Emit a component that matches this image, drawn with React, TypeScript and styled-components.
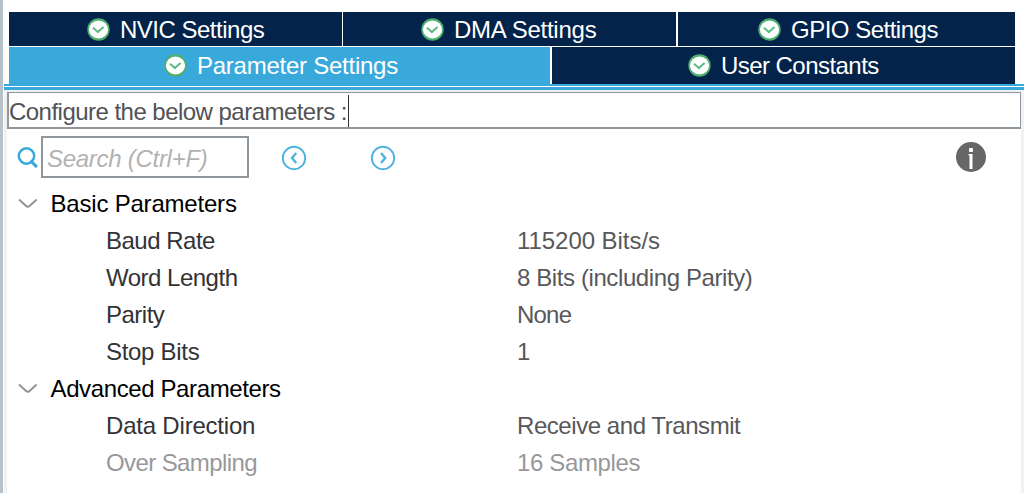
import React from "react";
import styled, { createGlobalStyle } from "styled-components";

const GlobalStyle = createGlobalStyle`
  * { box-sizing: border-box; }
  body {
    margin: 0;
    background: #fff;
    font-family: "Liberation Sans", Arial, sans-serif;
    font-size: 24px;
    overflow: hidden;
  }
`;

const Window = styled.div`
  display: flex;
  flex-direction: column;
  width: 1024px;
  height: 493px;
  padding-top: 12px;
  border-left: 3px solid #b7c1c9;
`;

const TabRow = styled.div<{ $height: number }>`
  display: flex;
  height: ${(p) => p.$height}px;
  margin: 0 9px 1px 6px;
`;

const Tab = styled.div<{ $width: number; $pad: number; $active?: boolean; $gap?: number; $lower?: boolean }>`
  display: flex;
  align-items: center;
  gap: 10px;
  flex: none;
  width: ${(p) => p.$width}px;
  margin-right: ${(p) => p.$gap ?? 0}px;
  padding-left: ${(p) => p.$pad}px;
  padding-top: ${(p) => (p.$lower ? 0 : 1)}px;
  background: ${(p) => (p.$active ? "#39a9dc" : "#03234b")};
  color: #fff;
`;

const Label = styled.span<{ $track?: number }>`
  line-height: 28px;
  white-space: pre;
  letter-spacing: ${(p) => p.$track ?? 0}px;
`;

const Rule = styled.div`
  flex: none;
  height: 8px;
  margin: -1px 0 0 1px;
  background: linear-gradient(#39a9dc 0 2px, #fff 2px 3px, #39a9dc 3px 6px, #f0f1f4 6px 8px);
`;

const Panel = styled.div`
  flex: 1;
  margin-left: 1px;
  border-left: 3px solid #f0f0f0;
  border-right: 3px solid #f0f1f4;
`;

const Notice = styled.div`
  display: flex;
  height: 37px;
  padding: 5px 0 0 0;
  border: 1px solid #8f979d;
  border-left-width: 2px;
  border-bottom-width: 2px;
  color: #525256;
`;

const Caret = styled.i`
  width: 1px;
  height: 32px;
  margin: -3px 0 0 1px;
  background: #333;
`;

const Toolbar = styled.div`
  display: flex;
  align-items: center;
  height: 56px;
  padding: 0 35px 0 10px;
`;

const SearchBox = styled.div`
  display: flex;
  align-items: center;
  width: 208px;
  height: 42px;
  margin: 0 32px 0 3px;
  padding: 3px 0 0 4px;
  border: 2px solid #8f979d;
  color: #b2b2b2;
  font-style: italic;
`;

const NavIcons = styled.div`
  display: flex;
  gap: 63px;
  flex: 1;
  padding-top: 1px;
`;

const Row = styled.div`
  display: grid;
  grid-template-columns: 510px 1fr;
  height: 37px;
  align-items: center;
`;

const GroupName = styled.div`
  display: flex;
  align-items: center;
  gap: 12.5px;
  padding-left: 11px;
  color: #000;
`;

const Name = styled.div<{ $muted?: boolean }>`
  padding-left: 99px;
  color: ${(p) => (p.$muted ? "#98989b" : "#333336")};
`;

const Value = styled.div<{ $muted?: boolean }>`
  color: ${(p) => (p.$muted ? "#98989b" : "#58585b")};
`;

const CheckBadge = () => (
  <svg width="23" height="23" viewBox="0 0 23 23">
    <circle cx="11.5" cy="11.5" r="11.2" fill="#4caf6e" />
    <ellipse cx="11.5" cy="11.5" rx="9.6" ry="9" fill="#fff" />
    <path d="M6 9.8l4.8 4.2 5.8-5" fill="none" stroke="#5dbb80" strokeWidth="2" />
    <path d="M9 12.6h4l-2 3z" fill="#5dbb80" />
  </svg>
);

const SearchIcon = () => (
  <svg width="21" height="21" viewBox="0 0 21 21" fill="none" stroke="#39a9dc">
    <circle cx="9.5" cy="9" r="7.7" strokeWidth="2.5" />
    <path d="M13.5 13.5l6.3 6.5" strokeWidth="3.2" />
  </svg>
);

const CircleArrow = ({ back }: { back?: boolean }) => (
  <svg width="26" height="26" viewBox="0 0 26 26" fill="none" stroke="#4fb2df">
    <circle cx="13" cy="13" r="11.2" strokeWidth="1.9" />
    <path d={back ? "M15.2 8l-4.2 5 4.2 5" : "M11 8l4.2 5-4.2 5"} strokeWidth="2.4" />
  </svg>
);

const InfoIcon = () => (
  <svg width="30" height="30" viewBox="0 0 30 30">
    <circle cx="15" cy="15" r="15" fill="#666" />
    <rect x="13" y="6" width="4" height="4" rx="1" fill="#fff" />
    <path d="M12.6 12H16.5v15h-3V13.5h-.9z" fill="#fff" />
  </svg>
);

const Chevron = () => (
  <svg width="20" height="12" viewBox="0 0 20 12">
    <path d="M1 1.5l6.8 6.3q2 1.8 4 0l6.8-6.3" fill="none" stroke="#929292" strokeWidth="1.9" />
  </svg>
);

type Param = { name: string; value: string; nt: number; vt: number; muted?: boolean };

const groups: { title: string; track: number; params: Param[] }[] = [
  {
    title: "Basic Parameters",
    track: -0.2,
    params: [
      { name: "Baud Rate", value: "115200 Bits/s", nt: -0.5, vt: -0.05 },
      { name: "Word Length", value: "8 Bits (including Parity)", nt: -0.5, vt: -0.4 },
      { name: "Parity", value: "None", nt: -0.5, vt: -0.8 },
      { name: "Stop Bits", value: "1", nt: -0.3, vt: 0 },
    ],
  },
  {
    title: "Advanced Parameters",
    track: -0.38,
    params: [
      { name: "Data Direction", value: "Receive and Transmit", nt: -0.2, vt: -0.44 },
      { name: "Over Sampling", value: "16 Samples", nt: -0.6, vt: -0.36, muted: true },
    ],
  },
];

export default function App() {
  return (
    <Window>
      <GlobalStyle />
      <TabRow $height={34}>
        <Tab $width={333} $pad={78} $gap={1}><CheckBadge /><Label $track={-0.5}>NVIC Settings</Label></Tab>
        <Tab $width={333} $pad={78} $gap={2}><CheckBadge /><Label $track={-0.25}>DMA Settings</Label></Tab>
        <Tab $width={337} $pad={80}><CheckBadge /><Label $track={-0.5}>GPIO Settings</Label></Tab>
      </TabRow>
      <TabRow $height={37}>
        <Tab $width={541} $pad={155} $gap={2} $active $lower><CheckBadge /><Label $track={-0.25}>Parameter Settings</Label></Tab>
        <Tab $width={463} $pad={136} $lower><CheckBadge /><Label $track={-0.55}>User Constants</Label></Tab>
      </TabRow>
      <Rule />
      <Panel>
        <Notice><Label $track={-0.53}>Configure the below parameters :</Label><Caret /></Notice>
        <Toolbar>
          <SearchIcon />
          <SearchBox><Label $track={-0.28}>Search (Ctrl+F)</Label></SearchBox>
          <NavIcons><CircleArrow back /><CircleArrow /></NavIcons>
          <InfoIcon />
        </Toolbar>
        {groups.map((g) => (
          <React.Fragment key={g.title}>
            <Row><GroupName><Chevron /><Label $track={g.track}>{g.title}</Label></GroupName></Row>
            {g.params.map((p) => (
              <Row key={p.name}>
                <Name $muted={p.muted}><Label $track={p.nt}>{p.name}</Label></Name>
                <Value $muted={p.muted}><Label $track={p.vt}>{p.value}</Label></Value>
              </Row>
            ))}
          </React.Fragment>
        ))}
      </Panel>
    </Window>
  );
}
